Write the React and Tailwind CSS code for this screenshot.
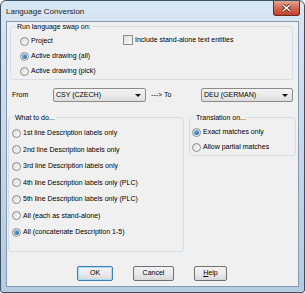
import React from 'react';

function Radio({ checked }) {
  return (
    <span className="w-[9px] h-[9px] rounded-full border border-[#8d8d8d] bg-gradient-to-br from-[#dcdcdc] to-[#fbfbfb] flex items-center justify-center shrink-0">
      {checked && <span className="w-[5px] h-[5px] rounded-full bg-gradient-to-br from-[#7fc4f2] to-[#1d5d9b]" />}
    </span>
  );
}

function RadioRow({ label, checked, h = 'h-[16px]' }) {
  return (
    <div className={`${h} flex items-center gap-[2px]`}>
      <Radio checked={checked} />
      <span>{label}</span>
    </div>
  );
}

function Group({ title, className, children }) {
  return (
    <div className={`relative border border-[#d5dfe5] rounded-[3px] ${className}`}>
      <span className="absolute -top-[5px] left-[5px] px-[1px] bg-[#f0f0f0] leading-[9px]">{title}</span>
      {children}
    </div>
  );
}

function Combo({ value, w }) {
  return (
    <div className={`${w} h-[14px] border border-[#8b8b8b] rounded-[2px] bg-gradient-to-b from-[#f4f4f4] via-[#ebebeb] to-[#dcdcdc] flex items-center pl-[2px] pr-[4px]`}>
      <span className="flex-1">{value}</span>
      <svg width="6" height="3" viewBox="0 0 6 3"><path d="M0 0h6L3 3z" fill="#111" /></svg>
    </div>
  );
}

function Button({ label, w, primary, children }) {
  return (
    <div className={`${w} h-[15px] rounded-[2px] border ${primary ? 'border-[#3c7fb1] shadow-[inset_0_0_0_1px_#a8dcf6]' : 'border-[#707070]'} bg-gradient-to-b from-[#f2f2f2] via-[#ebebeb] to-[#d8d8d8] flex items-center justify-center`}>
      {children || label}
    </div>
  );
}

export default function App() {
  return (
    <div className="w-[305px] h-[293px] bg-white" style={{ fontFamily: '"Liberation Sans", Arial, sans-serif' }}>
      <div className="w-[305px] h-[293px] rounded-t-[6px] rounded-b-[3px] border border-[#3e5266] bg-gradient-to-b from-[#d9e6f3] via-[#c6d7e9] to-[#b4cbe0] flex flex-col text-[7px] text-black">
        <div className="h-[20px] flex items-start justify-between pl-[5px] pr-[4px]">
          <span className="text-[8px] text-[#1b1b1b] mt-[5px]">Language Conversion</span>
          <div className="w-[27px] h-[15px] rounded-b-[3px] border border-t-0 border-[#6b2a1f] bg-gradient-to-b from-[#e3a494] via-[#cf6a55] to-[#c23f28] flex items-center justify-center">
            <svg width="9" height="8" viewBox="0 0 9 8">
              <path d="M1 1l7 6M8 1L1 7" stroke="#5a2218" strokeWidth="3" />
              <path d="M1 1l7 6M8 1L1 7" stroke="#fff" strokeWidth="1.6" />
            </svg>
          </div>
        </div>
        <div className="mx-[5px] h-[266px] border border-[#8599b0] bg-[#f0f0f0] flex flex-col">
          <Group title="Run language swap on:" className="ml-[3px] mt-[4px] w-[283px] h-[54px] flex">
            <div className="w-[112px] pl-[9px] pt-[7px] flex flex-col">
              <RadioRow label="Project" />
              <RadioRow label="Active drawing (all)" checked />
              <RadioRow label="Active drawing (pick)" />
            </div>
            <div className="pt-[8px] flex items-start gap-[2px]">
              <span className="w-[10px] h-[10px] border border-[#8d8d8d] bg-gradient-to-br from-[#dcdcdc] to-[#fbfbfb]" />
              <span className="leading-[10px]">Include stand-alone text entities</span>
            </div>
          </Group>
          <div className="mt-[8px] ml-[5px] h-[14px] flex items-center">
            <span className="w-[41px]">From</span>
            <Combo value="CSY (CZECH)" w="w-[93px]" />
            <span className="w-[55px] pl-[5px]">---&gt; To</span>
            <Combo value="DEU (GERMAN)" w="w-[92px]" />
          </div>
          <div className="mt-[15px] ml-[1px] flex items-start gap-[5px]">
            <Group title="What to do..." className="w-[176px] h-[135px] pl-[3px] pt-[7px] flex flex-col">
              <RadioRow h="h-[16.5px]" label="1st line Description labels only" />
              <RadioRow h="h-[16.5px]" label="2nd line Description labels only" />
              <RadioRow h="h-[16.5px]" label="3rd line Description labels only" />
              <RadioRow h="h-[16.5px]" label="4th line Description labels only (PLC)" />
              <RadioRow h="h-[16.5px]" label="5th line Description labels only (PLC)" />
              <RadioRow h="h-[16.5px]" label="All (each as stand-alone)" />
              <RadioRow h="h-[16.5px]" label="All (concatenate Description 1-5)" checked />
            </Group>
            <Group title="Translation on..." className="w-[107px] h-[39px] pl-[2px] pt-[7px] flex flex-col">
              <RadioRow h="h-[16.5px]" label="Exact matches only" checked />
              <RadioRow h="h-[16.5px]" label="Allow partial matches" />
            </Group>
          </div>
          <div className="mt-[14px] ml-[70px] flex gap-[20px]">
            <Button label="OK" w="w-[36px]" primary />
            <Button label="Cancel" w="w-[41px]" />
            <Button w="w-[33px]"><span><span className="underline">H</span>elp</span></Button>
          </div>
        </div>
      </div>
    </div>
  );
}
